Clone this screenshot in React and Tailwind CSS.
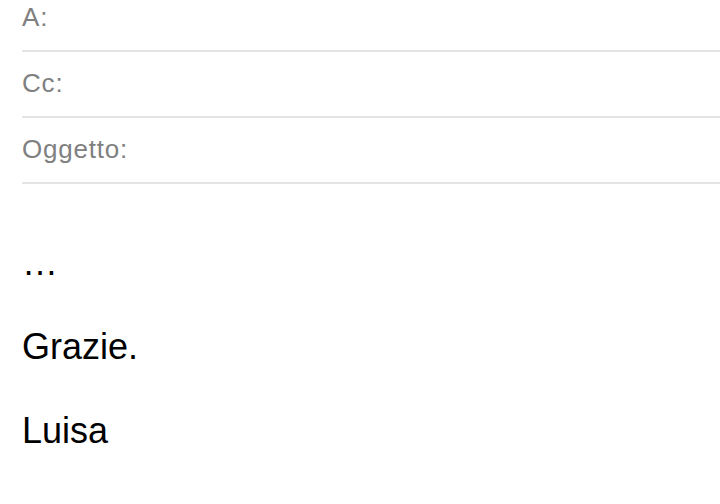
import React from 'react';

const fields = ['A:', 'Cc:', 'Oggetto:'];

export default function App() {
    return (
        <div className="min-h-[504px] bg-white pl-[22px] font-['Liberation_Sans',Arial,sans-serif]">
            <div>
                {fields.map((label, i) => (
                    <div
                        key={label}
                        className={`flex items-end border-b-2 border-[#e4e4e4] pb-[18px] ${i === 0 ? 'h-[52px]' : 'h-[66px]'}`}
                    >
                        <span className="text-[26px] leading-[30px] tracking-[0.8px] text-[#808080]">{label}</span>
                    </div>
                ))}
            </div>
            <div className="mt-[58px] flex flex-col gap-[42px] text-[36px] leading-[42px] text-black">
                <p>…</p>
                <p>Grazie.</p>
                <p>Luisa</p>
            </div>
        </div>
    );
}
